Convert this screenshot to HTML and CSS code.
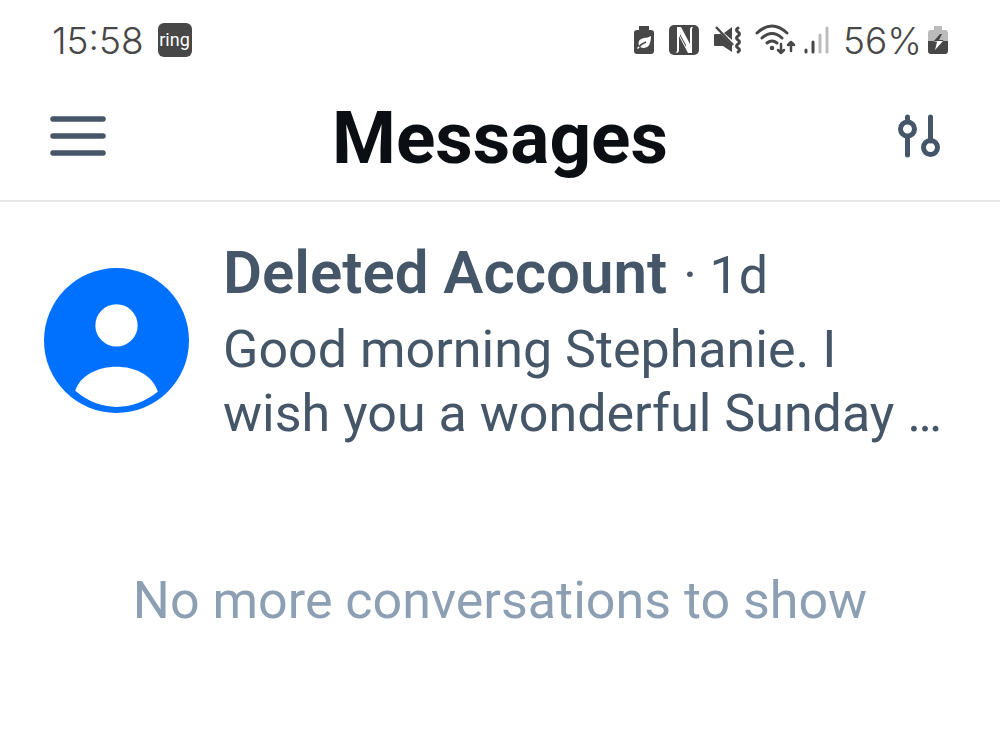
FILE: index.html
```html
<!DOCTYPE html>
<html lang="en">
<head>
    <meta charset="UTF-8" />
    <meta name="viewport" content="width=device-width, initial-scale=1.0" />
    <title>Messages</title>
    <link rel="stylesheet" href="styles.css">
</head>
<body>
    <div class="status-bar">
        <div class="status-left">
            <span>15:58</span>
            <span class="ring-badge">ring</span>
        </div>
        <div class="status-right">
            <div class="modes">
                <!-- battery saver -->
                <svg width="22" height="30" viewBox="0 0 22 30">
                    <path d="M6 1h10v4h2q3 0 3 3v18q0 3-3 3H4q-3 0-3-3V8q0-3 3-3h2z" fill="#474747"/>
                    <path d="M18 11q0 12-7 12-2 0-4-1l-2 2-1-1 2-2q-2-7 5-8 4 0 7-2z" fill="#fff"/>
                    <path d="M6 22q2-3 7-5" stroke="#474747" stroke-width="1.5" fill="none"/>
                </svg>
                <!-- NFC -->
                <svg width="30" height="30" viewBox="0 0 30 30">
                    <rect width="30" height="30" rx="5" fill="#474747"/>
                    <path d="M6 28q2 0 2-3V2h4l9 17V5q0-3 2-3h1q-1 1-1 3v23h-4L10 11v14q0 3-3 3z" fill="#fff"/>
                    <path d="M11 9v2l6 11v-2z" fill="#474747"/>
                </svg>
                <!-- muted, vibrate -->
                <svg width="30" height="30" viewBox="0 0 30 30">
                    <path d="M2 9h6l11 11v7l-9-6H2q-1 0-1-1V10q0-1 1-1zM11 8l8-6v13z" fill="#474747"/>
                    <path d="M3 2l17 18" stroke="#474747" stroke-width="2.5"/>
                    <path d="M25 3q-3 2 0 4t0 4 0 4 0 4 0 4 0 4" stroke="#474747" stroke-width="3" stroke-linecap="round" fill="none"/>
                </svg>
            </div>
            <div class="network">
                <!-- wifi with traffic arrows -->
                <svg width="42" height="32" viewBox="0 0 42 32">
                    <g fill="none" stroke="#474747" stroke-width="3" stroke-linecap="round" stroke-linejoin="round">
                        <path d="M2 9q15-14 30 0M7 14q10-9 20 0M12 19q5-4 10 0"/>
                        <path d="M26 20v9M23 26l3 3 3-3M36 27v-9M33 21l3-3 3 3" stroke-width="2.5"/>
                    </g>
                    <circle cx="17" cy="24" r="2.3" fill="#474747"/>
                </svg>
                <!-- signal -->
                <svg width="28" height="30" viewBox="0 0 28 30">
                    <path d="M3 25v2M10 17v10" stroke="#474747" stroke-width="3" stroke-linecap="round"/>
                    <path d="M17 10v17M24 3v24" stroke="#bbb" stroke-width="3" stroke-linecap="round"/>
                </svg>
            </div>
            <div class="power">
                <span>56%</span>
                <!-- battery, charging -->
                <svg width="20" height="30" viewBox="0 0 20 30">
                    <path d="M6 1h8v4h3q3 0 3 3v8H0V8q0-3 3-3h3z" fill="#bbb"/>
                    <path d="M0 16h20v10q0 3-3 3H3q-3 0-3-3z" fill="#474747"/>
                    <path d="M12 9L5 17h11l-1-2h-4l3-6z" fill="#474747"/>
                    <path d="M5 17h4l-2 8 8-9h-5z" fill="#fff"/>
                </svg>
            </div>
        </div>
    </div>

    <header class="header">
        <button class="icon-btn" aria-label="Open menu">
            <svg width="56" height="40" viewBox="0 0 56 40">
                <path d="M3 3h50M3 20h50M3 37h50" stroke="#455669" stroke-width="5.5" stroke-linecap="round"/>
            </svg>
        </button>
        <h1>Messages</h1>
        <button class="icon-btn settings" aria-label="Chat settings">
            <svg width="42" height="44" viewBox="0 0 42 44">
                <g fill="none" stroke="#455669" stroke-width="5" stroke-linecap="round">
                    <path d="M9.500 3v3M9.500 24v17M32.500 3v24"/>
                    <circle cx="9.500" cy="15" r="7"/>
                    <circle cx="32.500" cy="33.500" r="7"/>
                </g>
            </svg>
        </button>
    </header>

    <main>
        <a class="conversation" href="#">
            <svg class="avatar" viewBox="0 0 144 144">
                <circle cx="72" cy="72" r="72" fill="#0070ff"/>
                <circle cx="72" cy="57" r="21" fill="#fff"/>
                <path d="M31 122C36 106 54 98 72 98s36 8 41 25Q94 138 72 138T31 122z" fill="#fff"/>
            </svg>
            <div class="conversation-text">
                <div class="title-row">
                    <h2>Deleted Account</h2>
                    <span class="time">· 1d</span>
                </div>
                <p>Good morning Stephanie. I<br>wish you a wonderful Sunday …</p>
            </div>
        </a>
        <p class="list-end">No more conversations to show</p>
    </main>
</body>
</html>
```
FILE: styles.css
```css
body {
    margin: 0;
    background: #fff;
    color: #455669;
    font-family: Roboto, sans-serif;
}

h1, h2, p {
    margin: 0;
}

.status-bar {
    display: flex;
    justify-content: space-between;
    align-items: center;
    height: 80px;
    padding: 0 52px;
    color: #474747;
    font-family: Inter, sans-serif;
    font-size: 37px;
    font-weight: 300;
}

.status-left, .status-right, .modes, .network, .power {
    display: flex;
    align-items: center;
}

.status-left, .modes {
    gap: 14px;
}

.status-right {
    gap: 12px;
}

.network, .power {
    gap: 6px;
}

.ring-badge {
    width: 34px;
    border-radius: 6px;
    background: #474747;
    color: #fff;
    font-family: Roboto, sans-serif;
    font-size: 18px;
    font-weight: 400;
    line-height: 34px;
    text-align: center;
}

.header {
    display: grid;
    grid-template-columns: 1fr auto 1fr;
    align-items: center;
    height: 112px;
    padding: 0 50px 8px;
    border-bottom: 2px solid #e8e8e8;
}

.header h1 {
    padding-top: 4px;
    color: #0b0f14;
    font-size: 73px;
    font-weight: 700;
    line-height: 84px;
}

.icon-btn {
    display: flex;
    padding: 0;
    border: none;
    background: none;
    cursor: pointer;
}

.settings {
    justify-content: flex-end;
    padding-right: 10px;
}

.conversation {
    display: flex;
    align-items: center;
    gap: 34px;
    padding: 33px 44px 38px;
    color: inherit;
    text-decoration: none;
}

.avatar {
    flex: none;
    width: 145px;
    height: 145px;
}

.title-row {
    display: flex;
    align-items: baseline;
    gap: 16px;
    margin-bottom: 7px;
}

.conversation h2 {
    font-size: 60px;
    font-weight: 600;
    line-height: 76px;
}

.time, .conversation p, .list-end {
    font-size: 52px;
    line-height: 64px;
}

.list-end {
    padding: 85px 44px;
    color: #8c9fb3;
    text-align: center;
}
```
